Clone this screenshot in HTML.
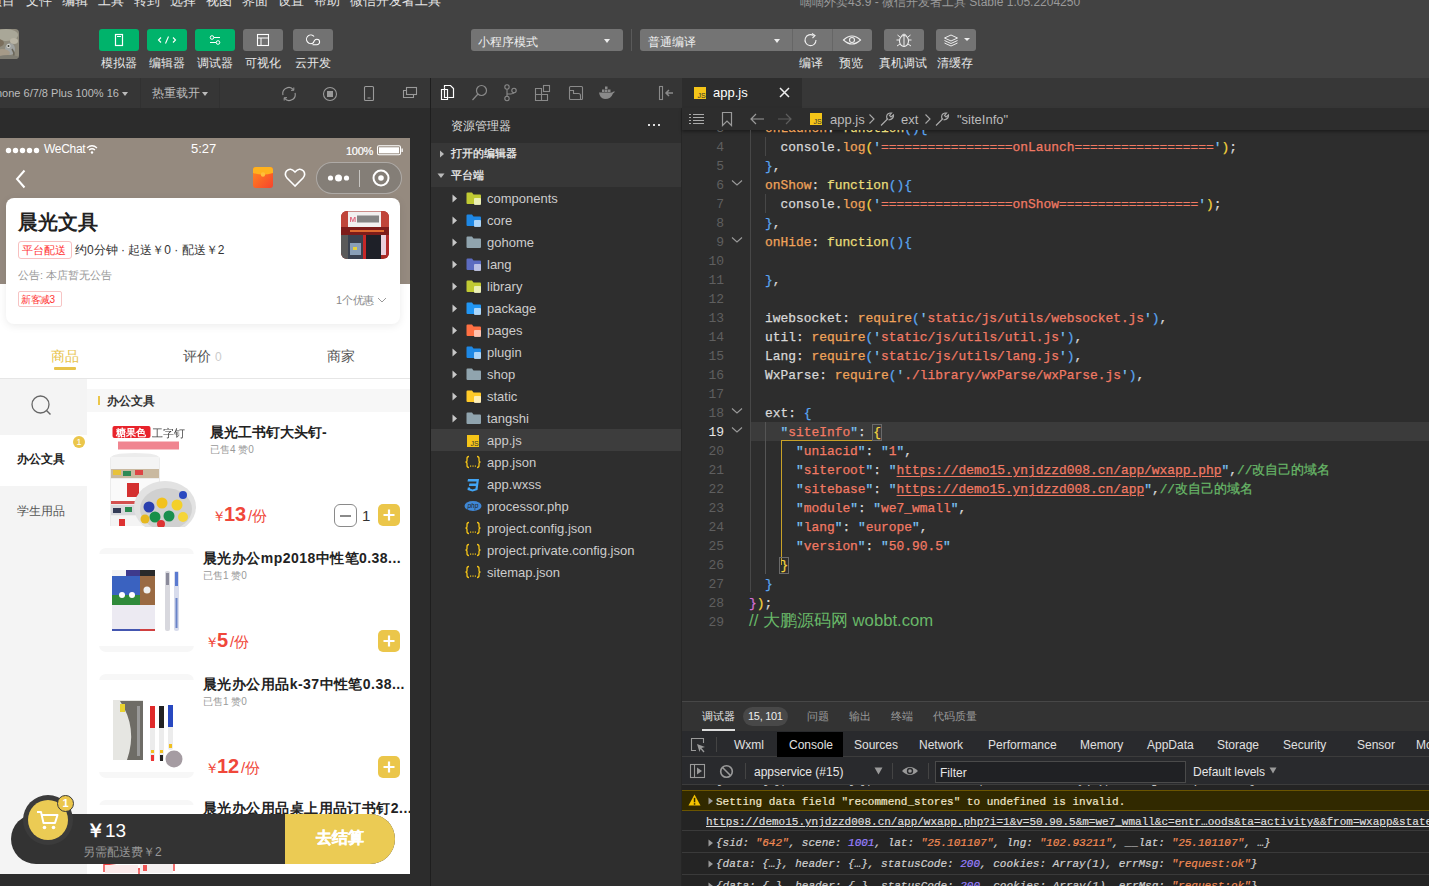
<!DOCTYPE html>
<html><head><meta charset="utf-8">
<style>
*{margin:0;padding:0;box-sizing:border-box}
html,body{width:1429px;height:886px;overflow:hidden;background:#2c2c2c;font-family:"Liberation Sans",sans-serif;color:#ddd}
.a{position:absolute}
.t{position:absolute;white-space:nowrap;line-height:1}
/* top */
#top{left:0;top:0;width:1429px;height:78px;background:#424242}
.menu{top:-6px;font-size:13px;color:#e6e6e6}
.tbtn{top:29px;width:40px;height:22px;border-radius:3px;background:#727272}
.tbtn.g{background:#00b36b}
.tlbl{top:57px;font-size:12px;color:#e8e8e8}
/* sim toolbar */
#simbar{left:0;top:78px;width:430px;height:30px;background:#363636}
#sim{left:0;top:108px;width:430px;height:778px;background:#2c2c2c}
#vsep{left:430px;top:78px;width:1px;height:808px;background:#1e1e1e}
/* explorer */
#exp{left:431px;top:78px;width:251px;height:808px;background:#2e2e2e}
#expbar{left:431px;top:78px;width:251px;height:30px;background:#353535}
/* editor */
#ed{left:682px;top:78px;width:747px;height:623px;background:#2d2d2d}
#tabbar{left:682px;top:78px;width:747px;height:30px;background:#373737}
#tab{left:682px;top:78px;width:120px;height:30px;background:#2d2d2d}
#crumb{left:682px;top:108px;width:747px;height:22px;background:#2d2d2d;box-shadow:0 2px 3px rgba(0,0,0,.35)}
/* debugger */
#dbg{left:682px;top:701px;width:747px;height:185px;background:#2b2b2b}
#dbgtabs{left:682px;top:701px;width:747px;height:30px;background:#333;border-top:1px solid #474747}
#dttabs{left:682px;top:731px;width:747px;height:26px;background:#292a2d;border-bottom:1px solid #3c3c3c}
#dtool{left:682px;top:757px;width:747px;height:28px;background:#292a2d;border-bottom:1px solid #3c3c3c}
.ln{left:690px;width:34px;text-align:right;font-family:"Liberation Mono",monospace;font-size:13px;line-height:19px}
.code{-webkit-text-stroke-width:0.25px;font-family:"Liberation Mono",monospace;font-size:12.9px;line-height:19px;white-space:pre}
.mono{-webkit-text-stroke-width:0.2px;font-family:"Liberation Mono",monospace;font-size:11px;line-height:1}
</style></head><body>
<div id="top" class="a"></div>
<div id="simbar" class="a"></div>
<div id="sim" class="a"></div>
<div id="vsep" class="a"></div>
<div id="exp" class="a"></div>
<div id="expbar" class="a"></div>
<div id="ed" class="a"></div>
<div class="a" style="left:681px;top:108px;width:1px;height:778px;background:#262626"></div>
<div id="tabbar" class="a"></div>
<div id="tab" class="a"></div>
<div id="crumb" class="a"></div>
<div id="dbg" class="a"></div>
<div id="dbgtabs" class="a"></div>
<div id="dttabs" class="a"></div>
<div id="dtool" class="a"></div>
<!--PHONE--><div class="a" id="phone" style="left:0;top:138px;width:410px;height:736px;background:#fff;overflow:hidden">
 <div class="a" style="left:0;top:0;width:410px;height:146px;background:#958a7f"></div>
 <!-- status bar -->
 <svg class="a" style="left:5px;top:9px" width="38" height="7"><circle cx="3.5" cy="3.5" r="2.7" fill="#fff"/><circle cx="10.5" cy="3.5" r="2.7" fill="#fff"/><circle cx="17.5" cy="3.5" r="2.7" fill="#fff"/><circle cx="24.5" cy="3.5" r="2.7" fill="#fff"/><circle cx="31.5" cy="3.5" r="2.7" fill="#fff"/></svg>
 <div class="t" style="left:44px;top:5px;font-size:12px;color:#fff;letter-spacing:-0.3px">WeChat</div>
 <svg class="a" style="left:86px;top:6px" width="12" height="10"><path d="M1 4 Q6 -0.5 11 4" fill="none" stroke="#fff" stroke-width="1.3"/><path d="M3 6 Q6 3.5 9 6" fill="none" stroke="#fff" stroke-width="1.3"/><circle cx="6" cy="8.5" r="1.2" fill="#fff"/></svg>
 <div class="t" style="left:191px;top:4px;font-size:13px;color:#fff">5:27</div>
 <div class="t" style="left:346px;top:8px;font-size:11px;color:#fff;letter-spacing:-0.3px;-webkit-text-stroke:0.2px #fff">100%</div>
 <svg class="a" style="left:376px;top:7px" width="28" height="11"><rect x="1.5" y="0.8" width="23" height="9" rx="1.5" fill="none" stroke="#fff" stroke-width="1.1"/><rect x="3" y="2.3" width="20" height="6" fill="#fff"/><path d="M25.5 3.5h1.3v3.5h-1.3z" fill="#fff"/></svg>
 <!-- nav -->
 <svg class="a" style="left:14px;top:31px" width="14" height="20"><path d="M10.5 1.5 L3 10 L10.5 18.5" fill="none" stroke="#fff" stroke-width="2"/></svg>
 <svg class="a" style="left:252px;top:28px" width="22" height="23"><defs><linearGradient id="re" x1="0" y1="0" x2="1" y2="1"><stop offset="0" stop-color="#ff8a1e"/><stop offset="1" stop-color="#f8432c"/></linearGradient></defs><rect x="1" y="1" width="20" height="21" rx="3" fill="url(#re)"/><path d="M1 4 Q1 1 4 1 H18 Q21 1 21 4 V7 Q11 10 1 7Z" fill="#ffb21e"/><circle cx="11" cy="8.5" r="2.2" fill="#ffbf3a"/></svg>
 <svg class="a" style="left:284px;top:29px" width="22" height="21"><path d="M11 19 L3 11 Q0 7.5 2.5 4 Q6.5 0 11 5 Q15.5 0 19.5 4 Q22 7.5 19 11Z" fill="none" stroke="#fff" stroke-width="1.6"/></svg>
 <div class="a" style="left:316px;top:24px;width:86px;height:32px;border-radius:16px;background:rgba(110,110,110,.45);border:1px solid rgba(255,255,255,.35)"></div>
 <svg class="a" style="left:326px;top:33px" width="26" height="14"><circle cx="4.5" cy="7" r="2.6" fill="#fff"/><circle cx="12.5" cy="7" r="3.5" fill="#fff"/><circle cx="20.5" cy="7" r="2.6" fill="#fff"/></svg>
 <div class="a" style="left:359px;top:32px;width:1px;height:17px;background:rgba(255,255,255,.55)"></div>
 <svg class="a" style="left:371px;top:30px" width="20" height="20"><circle cx="10" cy="10" r="7.5" fill="none" stroke="#fff" stroke-width="2"/><circle cx="10" cy="10" r="2.8" fill="#fff"/></svg>
 <!-- store card -->
 <div class="a" style="left:6px;top:60px;width:394px;height:126px;background:#fff;border-radius:8px;box-shadow:0 2px 8px rgba(0,0,0,.08)"></div>
 <div class="t" style="left:18px;top:74px;font-size:20px;font-weight:bold;color:#222">晨光文具</div>
 <div class="a" style="left:18px;top:103px;width:54px;height:18px;border:1px solid #f8c0c0;border-radius:3px"></div>
 <div class="t" style="left:22px;top:107px;font-size:11px;color:#f33">平台配送</div>
 <div class="t" style="left:75px;top:106px;font-size:12px;color:#333">约0分钟 · 起送￥0 · 配送￥2</div>
 <svg class="a" style="left:341px;top:73px;filter:blur(0.5px)" width="48" height="48"><defs><clipPath id="rc"><rect width="48" height="48" rx="6"/></clipPath></defs><g clip-path="url(#rc)">
  <rect width="48" height="48" fill="#a52a24"/>
  <rect x="0" y="0" width="7" height="16" fill="#c0453a"/><rect x="40" y="0" width="8" height="16" fill="#c0453a"/>
  <rect x="7" y="0.5" width="33" height="15.5" fill="#f2f0f0"/>
  <text x="8.5" y="11" font-size="8" font-family="Liberation Sans" font-weight="bold" fill="#e06a80">M</text>
  <rect x="16" y="4.5" width="22" height="7" fill="#555" opacity=".7"/>
  <rect x="0" y="16" width="48" height="8" fill="#7e1c1a"/>
  <rect x="9" y="19" width="34" height="2" fill="#e06a30"/>
  <rect x="0" y="24" width="7" height="24" fill="#5a5a5a"/>
  <rect x="7" y="24" width="15" height="24" fill="#3a4250"/>
  <rect x="9" y="32" width="11" height="12" fill="#8aa0b8"/>
  <rect x="12" y="36" width="4" height="3" fill="#e6d23a"/>
  <rect x="22" y="24" width="3" height="24" fill="#c62828"/>
  <rect x="25" y="24" width="15" height="24" fill="#1e2028"/>
  <rect x="40" y="24" width="5" height="20" fill="#e9d0dc"/>
  <rect x="45" y="24" width="3" height="24" fill="#b02a2a"/>
</g></svg>
 <div class="t" style="left:18px;top:132px;font-size:11px;color:#999">公告: 本店暂无公告</div>
 <div class="a" style="left:18px;top:153px;width:44px;height:16px;border:1px solid #f7c4c4;border-radius:2px"></div>
 <div class="t" style="left:21px;top:157px;font-size:10px;color:#f33;letter-spacing:-0.5px">新客减3</div>
 <div class="t" style="left:336px;top:157px;font-size:11px;color:#888;letter-spacing:-0.3px">1个优惠</div>
 <svg class="a" style="left:377px;top:159px" width="10" height="7"><path d="M1 1 L5 5 L9 1" fill="none" stroke="#999" stroke-width="1"/></svg>
 <!-- tabs -->
 <div class="t" style="left:51px;top:211px;font-size:14px;color:#e8c34a">商品</div>
 <div class="a" style="left:54px;top:229px;width:22px;height:3px;background:#e8c34a;border-radius:1px"></div>
 <div class="t" style="left:183px;top:211px;font-size:14px;color:#555">评价 <span style="color:#ccc;font-size:12px">0</span></div>
 <div class="t" style="left:327px;top:211px;font-size:14px;color:#555">商家</div>
 <div class="a" style="left:0;top:240px;width:410px;height:1px;background:#e6e6e6"></div>
 <!-- left categories -->
 <div class="a" style="left:0;top:241px;width:87px;height:495px;background:#f4f4f4"></div>
 <svg class="a" style="left:30px;top:256px" width="24" height="24"><circle cx="10.5" cy="10.5" r="8.5" fill="none" stroke="#666" stroke-width="1.3"/><path d="M16.5 16.5 L20.5 20.5" stroke="#666" stroke-width="1.5"/></svg>
 <div class="a" style="left:0;top:297px;width:87px;height:51px;background:#fff"></div>
 <div class="t" style="left:17px;top:315px;font-size:12px;color:#222;font-weight:bold">办公文具</div>
 <div class="a" style="left:73px;top:298px;width:12px;height:12px;border-radius:6px;background:#ebc64a;color:#fff;font-size:9px;line-height:12px;text-align:center">1</div>
 <div class="t" style="left:17px;top:367px;font-size:12px;color:#555">学生用品</div>
 <!-- section header -->
 <div class="a" style="left:87px;top:251px;width:323px;height:23px;background:#f7f7f7"></div>
 <div class="a" style="left:98px;top:258px;width:2px;height:9px;background:#ebc64a"></div>
 <div class="t" style="left:107px;top:257px;font-size:12px;color:#333;font-weight:bold">办公文具</div>
 <!-- product 1 -->
 <svg class="a" style="left:99px;top:285px;filter:blur(0.45px)" width="102" height="104">
  <rect x="0" y="0" width="102" height="104" fill="#fff"/>
  <rect x="13.5" y="3" width="38" height="12" rx="2" fill="#e8232b"/>
  <text x="17" y="13" font-size="10" font-family="Liberation Sans" font-weight="bold" fill="#fff">糖果色</text>
  <text x="53" y="13.5" font-size="10.5" font-family="Liberation Sans" fill="#444">工字钉</text>
  <rect x="19" y="18.5" width="61" height="8" fill="#f08590"/>
  <path d="M11 36 Q11 30 36 30 Q61 30 61 36 V103 H11Z" fill="#ececec"/>
  <rect x="12" y="34" width="48" height="12" fill="#f4f4f4"/>
  <rect x="12" y="46" width="48" height="9" fill="#c9b9a0"/>
  <rect x="14" y="47" width="8" height="5" fill="#e8c23a"/><rect x="24" y="48" width="8" height="5" fill="#2d8a55"/><rect x="36" y="47" width="8" height="5" fill="#d44"/>
  <rect x="12" y="56" width="48" height="22" fill="#fafafa"/>
  <rect x="28" y="60" width="12" height="14" fill="#d43030"/>
  <rect x="12" y="78" width="48" height="3" fill="#d45050"/>
  <rect x="12" y="82" width="48" height="10" fill="#d8d8dc"/><rect x="14" y="85" width="8" height="5" fill="#333a55"/><rect x="26" y="84" width="7" height="5" fill="#2a8a50"/>
  <rect x="12" y="93" width="48" height="10" fill="#f4f4f4"/>
  <rect x="20" y="96" width="6" height="7" fill="#d33"/>
  <ellipse cx="66" cy="84" rx="31" ry="26" fill="#e2e2e2"/>
  <ellipse cx="67" cy="86" rx="26" ry="21" fill="#d0d0d0"/>
  <circle cx="50" cy="84" r="5.5" fill="#2a3fae"/><circle cx="63" cy="80" r="5.5" fill="#f2c21e"/><circle cx="78" cy="82" r="5.5" fill="#f3d02a"/>
  <circle cx="56" cy="94" r="5.5" fill="#17904a"/><circle cx="70" cy="93" r="5.5" fill="#1a8f4f"/><circle cx="84" cy="94" r="5" fill="#f5d53a"/>
  <circle cx="46" cy="96" r="4.5" fill="#e6b820"/><circle cx="62" cy="101" r="4" fill="#d33"/><circle cx="84" cy="72" r="4" fill="#2a48c0"/>
 </svg>
 <div class="t" style="left:210px;top:287px;font-size:14px;color:#222;font-weight:bold">晨光工书钉大头钉-</div>
 <div class="t" style="left:210px;top:307px;font-size:10px;color:#999">已售4 赞0</div>
 <div class="t" style="left:212px;top:371px;font-size:14px;color:#f0473a">￥</div>
 <div class="t" style="left:224px;top:366px;font-size:20px;color:#f0473a;font-weight:bold">13</div>
 <div class="t" style="left:248px;top:370px;font-size:15px;color:#f0473a">/份</div>
 <div class="a" style="left:334px;top:366px;width:23px;height:23px;border:1.3px solid #8a8a8a;border-radius:6px"></div>
 <div class="a" style="left:340px;top:377px;width:11px;height:1.5px;background:#8a8a8a"></div>
 <div class="t" style="left:362px;top:370px;font-size:15px;color:#333">1</div>
 <div class="a" style="left:378px;top:366px;width:22px;height:22px;border-radius:5px;background:#ebc64a"></div>
 <svg class="a" style="left:378px;top:366px" width="22" height="22"><path d="M11 5.5V16.5M5.5 11H16.5" stroke="#fff" stroke-width="2.2"/></svg>
 <!-- product 2 -->
 <div class="a" style="left:99px;top:410px;width:95px;height:104px;background:#f7f7f7;border-radius:7px"></div>
 <div class="a" style="left:99px;top:416px;width:95px;height:92px;background:#fff"></div>
 <svg class="a" style="left:110px;top:430px;filter:blur(0.45px)" width="72" height="66">
  <rect x="2" y="2" width="43" height="61" fill="#f2f2f6"/>
  <rect x="2" y="2" width="14" height="6" fill="#f4f4f4"/><rect x="16" y="2" width="14" height="6" fill="#3e3a8c"/><rect x="30" y="2" width="15" height="6" fill="#2a2a2a"/>
  <rect x="2" y="8" width="28" height="27" fill="#3a62c0"/>
  <rect x="2" y="27" width="28" height="10" fill="#2f8a3a"/>
  <circle cx="12" cy="27" r="3" fill="#fff"/><circle cx="22" cy="27" r="3" fill="#fff"/>
  <rect x="30" y="8" width="15" height="29" fill="#9a6a42"/>
  <circle cx="37" cy="22" r="3.5" fill="#f0f0f0"/>
  <rect x="2" y="37" width="43" height="24" fill="#eceaf2"/>
  <rect x="2" y="61" width="28" height="2" fill="#4456b0"/><rect x="30" y="61" width="15" height="2" fill="#d04040"/>
  <rect x="55" y="3" width="5" height="60" rx="2" fill="#d8d8de"/><rect x="56" y="5" width="3" height="12" fill="#8a8a9a"/>
  <rect x="64" y="3" width="5" height="60" rx="2" fill="#d8dcec"/><rect x="65" y="4" width="3" height="14" fill="#5a7ad0"/><rect x="65.5" y="30" width="2" height="30" fill="#6a84c8"/>
 </svg>
 <div class="t" style="left:203px;top:413px;font-size:14px;color:#222;font-weight:bold;letter-spacing:0.45px">晨光办公mp2018中性笔0.38...</div>
 <div class="t" style="left:203px;top:433px;font-size:10px;color:#999">已售1 赞0</div>
 <div class="t" style="left:205px;top:497px;font-size:14px;color:#f0473a">￥</div>
 <div class="t" style="left:217px;top:492px;font-size:20px;color:#f0473a;font-weight:bold">5</div>
 <div class="t" style="left:230px;top:496px;font-size:15px;color:#f0473a">/份</div>
 <div class="a" style="left:378px;top:492px;width:22px;height:22px;border-radius:5px;background:#ebc64a"></div>
 <svg class="a" style="left:378px;top:492px" width="22" height="22"><path d="M11 5.5V16.5M5.5 11H16.5" stroke="#fff" stroke-width="2.2"/></svg>
 <!-- product 3 -->
 <div class="a" style="left:99px;top:536px;width:95px;height:104px;background:#f7f7f7;border-radius:7px"></div>
 <div class="a" style="left:99px;top:542px;width:95px;height:92px;background:#fff"></div>
 <svg class="a" style="left:110px;top:560px;filter:blur(0.45px)" width="76" height="72">
  <rect x="3" y="2" width="30" height="60" fill="#e6e6e2"/>
  <path d="M10 3 H33 V62 H17 Q28 30 10 3Z" fill="#6e6c66"/>
  <rect x="10" y="6" width="5" height="8" fill="#e8d230"/>
  <rect x="27" y="8" width="3" height="50" fill="#999"/>
  <rect x="40" y="8" width="5" height="55" rx="2" fill="#ececec"/><rect x="40" y="8" width="5" height="22" fill="#e02a2a"/><rect x="41" y="52" width="3" height="3" fill="#f0c020"/><rect x="41" y="57" width="3" height="6" fill="#e33"/>
  <rect x="49" y="8" width="5" height="55" rx="2" fill="#ececec"/><rect x="49" y="8" width="5" height="22" fill="#222"/><rect x="50" y="52" width="3" height="3" fill="#f0c020"/><rect x="50" y="57" width="3" height="6" fill="#222"/>
  <rect x="58" y="7" width="5" height="45" rx="2" fill="#ececec"/><rect x="58" y="7" width="5" height="22" fill="#2848c0"/><rect x="59" y="46" width="3" height="4" fill="#f0c020"/>
  <circle cx="64" cy="61" r="8.5" fill="#a59ca2"/>
 </svg>
 <div class="t" style="left:203px;top:539px;font-size:14px;color:#222;font-weight:bold;letter-spacing:0.45px">晨光办公用品k-37中性笔0.38...</div>
 <div class="t" style="left:203px;top:559px;font-size:10px;color:#999">已售1 赞0</div>
 <div class="t" style="left:205px;top:623px;font-size:14px;color:#f0473a">￥</div>
 <div class="t" style="left:217px;top:618px;font-size:20px;color:#f0473a;font-weight:bold">12</div>
 <div class="t" style="left:241px;top:622px;font-size:15px;color:#f0473a">/份</div>
 <div class="a" style="left:378px;top:618px;width:22px;height:22px;border-radius:5px;background:#ebc64a"></div>
 <svg class="a" style="left:378px;top:618px" width="22" height="22"><path d="M11 5.5V16.5M5.5 11H16.5" stroke="#fff" stroke-width="2.2"/></svg>
 <!-- product 4 -->
 <div class="a" style="left:99px;top:662px;width:95px;height:80px;background:#f7f7f7;border-radius:7px"></div>
 <div class="a" style="left:99px;top:667px;width:95px;height:70px;background:#fff"></div>
 <svg class="a" style="left:99px;top:722px;filter:blur(0.4px)" width="95" height="14"><path d="M5 4 L40 9 L75 3 M5 4 V12 M40 9 V14 M75 3 V11" stroke="#e44" stroke-width="1.5" fill="none"/><rect x="6" y="5" width="33" height="8" fill="#fbeaea"/><rect x="41" y="4" width="33" height="9" fill="#f4f0f0"/><rect x="44" y="5" width="4" height="6" fill="#e55"/></svg>
 <div class="t" style="left:203px;top:663px;font-size:14px;color:#222;font-weight:bold;letter-spacing:0.45px">晨光办公用品桌上用品订书钉2...</div>
 <!-- cart bar -->
 <div class="a" style="left:11px;top:676px;width:384px;height:50px;border-radius:25px;background:#333;overflow:hidden">
   <div class="a" style="left:274px;top:0;width:110px;height:50px;background:#ebcb54"></div>
 </div>
 <div class="t" style="left:316px;top:692px;font-size:16px;color:#fff;font-weight:bold;-webkit-text-stroke:0.3px #fff">去结算</div>
 <div class="a" style="left:23px;top:657px;width:50px;height:50px;border-radius:25px;background:#3b3b3b"></div>
 <div class="a" style="left:28px;top:662px;width:40px;height:40px;border-radius:20px;background:#ebcb54"></div>
 <svg class="a" style="left:34px;top:668px" width="28" height="28"><path d="M3 6 H7 L9.5 17 H21 L23.5 9 H8" fill="none" stroke="#fff" stroke-width="2" stroke-linejoin="round"/><circle cx="10.5" cy="21.5" r="1.8" fill="#fff"/><circle cx="19.5" cy="21.5" r="1.8" fill="#fff"/></svg>
 <div class="a" style="left:57px;top:657px;width:17px;height:17px;border-radius:9px;background:#ebc64a;border:1.5px solid #3b3b3b;color:#fff;font-size:11px;font-weight:bold;line-height:14px;text-align:center">1</div>
 <div class="t" style="left:86px;top:683px;font-size:19px;color:#fff"><b>￥</b>13</div>
 <div class="t" style="left:83px;top:708px;font-size:12px;color:#999">另需配送费￥2</div>
</div>
<!--/PHONE-->
<!--TOPCONTENT--><!-- menu -->
<div class="t menu" style="left:-11px">项目</div>
<div class="t menu" style="left:26px">文件</div>
<div class="t menu" style="left:62px">编辑</div>
<div class="t menu" style="left:98px">工具</div>
<div class="t menu" style="left:134px">转到</div>
<div class="t menu" style="left:170px">选择</div>
<div class="t menu" style="left:206px">视图</div>
<div class="t menu" style="left:242px">界面</div>
<div class="t menu" style="left:278px">设置</div>
<div class="t menu" style="left:314px">帮助</div>
<div class="t menu" style="left:350px">微信开发者工具</div>
<div class="t menu" style="left:800px;top:-4px;font-size:12px;color:#9a9a9a">嘀嘀外卖43.9 - 微信开发者工具 Stable 1.05.2204250</div>
<!-- avatar -->
<svg class="a" style="left:-12px;top:29px;filter:blur(0.6px)" width="31" height="30"><defs><clipPath id="av"><rect width="31" height="30" rx="4"/></clipPath></defs><g clip-path="url(#av)">
<rect width="31" height="30" fill="#8e8a7c"/>
<ellipse cx="18" cy="6" rx="12" ry="6" fill="#a9a798"/>
<ellipse cx="10" cy="14" rx="6" ry="4" fill="#7a6e5c"/>
<ellipse cx="22" cy="20" rx="5" ry="6" fill="#9fa2a0"/>
<ellipse cx="14" cy="24" rx="8" ry="4" fill="#a59a88"/>
<ellipse cx="26" cy="12" rx="4" ry="3" fill="#b8b4a4"/>
<circle cx="20.5" cy="17" r="2" fill="#d8d8d0"/><circle cx="20.5" cy="17" r="1" fill="#3a3a30"/>
<path d="M24 20 Q28 26 24 29" stroke="#6a665a" stroke-width="1.5" fill="none"/>
<ellipse cx="20" cy="29" rx="12" ry="3" fill="#7e7c72"/>
</g></svg>
<!-- green buttons -->
<div class="a tbtn g" style="left:99px">
 <svg width="40" height="22"><rect x="16.5" y="5.5" width="7" height="11" fill="none" stroke="#fff" stroke-width="1.2"/><line x1="18" y1="7.5" x2="22" y2="7.5" stroke="#fff"/></svg></div>
<div class="a tbtn g" style="left:147px">
 <svg width="40" height="22"><path d="M14 8.5 L11.5 11 L14 13.5 M26 8.5 L28.5 11 L26 13.5 M21.5 7.5 L18.5 14.5" fill="none" stroke="#fff" stroke-width="1.1"/></svg></div>
<div class="a tbtn g" style="left:195px">
 <svg width="40" height="22"><line x1="15" y1="8.5" x2="25" y2="8.5" stroke="#fff"/><line x1="15" y1="13.5" x2="25" y2="13.5" stroke="#fff"/><circle cx="17" cy="8.5" r="1.8" fill="#00b36b" stroke="#fff"/><circle cx="23" cy="13.5" r="1.8" fill="#00b36b" stroke="#fff"/></svg></div>
<div class="a tbtn" style="left:243px">
 <svg width="40" height="22"><rect x="14.5" y="5.5" width="11" height="11" fill="none" stroke="#fff" stroke-width="1.1"/><line x1="14.5" y1="9" x2="25.5" y2="9" stroke="#fff"/><line x1="18" y1="9" x2="18" y2="16.5" stroke="#fff"/></svg></div>
<div class="a tbtn" style="left:293px">
 <svg width="40" height="22"><path d="M21.1 7.5 A4.3 4.3 0 1 0 20.3 13.8 Q21.5 10.2 23.8 10.2 A2.8 2.8 0 0 1 23.8 15.8 H19.5" fill="none" stroke="#fff" stroke-width="1.1"/></svg></div>
<div class="t tlbl" style="left:101px">模拟器</div>
<div class="t tlbl" style="left:149px">编辑器</div>
<div class="t tlbl" style="left:197px">调试器</div>
<div class="t tlbl" style="left:245px">可视化</div>
<div class="t tlbl" style="left:295px">云开发</div>
<!-- mode select -->
<div class="a" style="left:471px;top:29px;width:152px;height:22px;border-radius:3px;background:#747474"></div>
<div class="t" style="left:478px;top:36px;font-size:12px;color:#eee">小程序模式</div>
<svg class="a" style="left:604px;top:39px" width="6" height="4"><path d="M0 0H6L3 4Z" fill="#eee"/></svg>
<div class="a" style="left:631px;top:29px;width:1px;height:22px;background:#5a5a5a"></div>
<div class="a" style="left:640px;top:29px;width:232px;height:22px;border-radius:3px;background:#747474"></div>
<div class="a" style="left:792px;top:29px;width:1px;height:22px;background:#666"></div>
<div class="a" style="left:832px;top:29px;width:1px;height:22px;background:#666"></div>
<div class="t" style="left:648px;top:36px;font-size:12px;color:#eee">普通编译</div>
<svg class="a" style="left:774px;top:39px" width="6" height="4"><path d="M0 0H6L3 4Z" fill="#eee"/></svg>
<svg class="a" style="left:802px;top:32px" width="18" height="16"><path d="M14 8 A5.5 5.5 0 1 1 11.5 3.5" fill="none" stroke="#eee" stroke-width="1.1"/><path d="M10 1.5 L13 3.5 L10.5 6" fill="none" stroke="#eee" stroke-width="1.1"/></svg>
<svg class="a" style="left:842px;top:33px" width="20" height="14"><path d="M1.5 7 Q10 -1 18.5 7 Q10 15 1.5 7Z" fill="none" stroke="#eee" stroke-width="1.1"/><circle cx="10" cy="7" r="2.5" fill="none" stroke="#eee" stroke-width="1.1"/></svg>
<div class="a" style="left:884px;top:29px;width:40px;height:22px;border-radius:3px;background:#747474"></div>
<svg class="a" style="left:894px;top:31px" width="20" height="18"><ellipse cx="10" cy="10" rx="4.5" ry="5.5" fill="none" stroke="#eee" stroke-width="1.1"/><path d="M10 4.5V15.5 M5.5 9H2.5 M14.5 9H17.5 M6 13L3 15 M14 13L17 15 M6 6L3.5 4 M14 6L16.5 4 M7.5 4.5 Q10 1.5 12.5 4.5" fill="none" stroke="#eee" stroke-width="1"/></svg>
<div class="a" style="left:936px;top:29px;width:40px;height:22px;border-radius:3px;background:#747474"></div>
<svg class="a" style="left:942px;top:32px" width="30" height="16"><path d="M2.5 6 L9 3 L15.5 6 L9 9Z M2.5 8.5 L9 11.5 L15.5 8.5 M2.5 11 L9 14 L15.5 11" fill="none" stroke="#eee" stroke-width="1"/><path d="M22 6H28L25 9Z" fill="#eee"/></svg>
<div class="t tlbl" style="left:799px">编译</div>
<div class="t tlbl" style="left:839px">预览</div>
<div class="t tlbl" style="left:879px">真机调试</div>
<div class="t tlbl" style="left:937px">清缓存</div>
<!-- sim toolbar -->
<div class="t" style="left:-4px;top:88px;font-size:11px;color:#bdbdbd">hone 6/7/8 Plus 100% 16</div>
<svg class="a" style="left:122px;top:92px" width="6" height="4"><path d="M0 0H6L3 4Z" fill="#bbb"/></svg>
<div class="a" style="left:140px;top:78px;width:1px;height:30px;background:#313131"></div>
<div class="t" style="left:152px;top:88px;font-size:11.5px;color:#bdbdbd">热重载</div><div class="t" style="left:188px;top:88px;font-size:11.5px;color:#bdbdbd">开</div>
<svg class="a" style="left:202px;top:92px" width="6" height="4"><path d="M0 0H6L3 4Z" fill="#bbb"/></svg>
<div class="a" style="left:219px;top:78px;width:1px;height:30px;background:#313131"></div>
<svg class="a" style="left:281px;top:86px" width="16" height="16"><path d="M2 9 A6 6 0 0 1 12.5 3.8 M14 7 A6 6 0 0 1 3.5 12.2" fill="none" stroke="#9a9a9a" stroke-width="1.1"/><path d="M12.8 1.5V4.3H10" fill="none" stroke="#9a9a9a"/><path d="M3.2 14.5V11.7H6" fill="none" stroke="#9a9a9a"/></svg>
<svg class="a" style="left:322px;top:86px" width="16" height="16"><circle cx="8" cy="8" r="6.5" fill="none" stroke="#9a9a9a" stroke-width="1.1"/><rect x="5" y="5" width="6" height="6" fill="#9a9a9a"/></svg>
<svg class="a" style="left:363px;top:85px" width="12" height="18"><rect x="1.5" y="1.5" width="9" height="14" rx="1" fill="none" stroke="#9a9a9a" stroke-width="1.1"/><line x1="4.5" y1="13" x2="7.5" y2="13" stroke="#9a9a9a"/></svg>
<svg class="a" style="left:402px;top:86px" width="16" height="14"><rect x="4.5" y="1.5" width="10" height="7" fill="none" stroke="#9a9a9a" stroke-width="1.1"/><path d="M4.5 4.5H1.5V11.5H11.5V8.5" fill="none" stroke="#9a9a9a" stroke-width="1.1"/></svg>
<!--/TOPCONTENT-->
<!--EXPCONTENT--><svg class="a" style="left:438px;top:84px" width="18" height="18"><path d="M6.5 3.5 V1.5 H12.5 L15.5 4.5 V13.5 H10.5" fill="none" stroke="#fff" stroke-width="1.2"/><path d="M3.5 5.5 H9.5 V15.5 H3.5Z" fill="none" stroke="#fff" stroke-width="1.2"/><path d="M6.5 3.5 V13.5 H10.5" fill="none" stroke="#fff" stroke-width="1.2"/></svg>
<svg class="a" style="left:471px;top:84px" width="18" height="18"><circle cx="10.5" cy="6.5" r="5" fill="none" stroke="#8a8a8a" stroke-width="1.2"/><path d="M7 10 L1.5 16" stroke="#8a8a8a" stroke-width="1.2"/></svg>
<svg class="a" style="left:503px;top:84px" width="16" height="18"><circle cx="4" cy="3" r="2.2" fill="none" stroke="#8a8a8a" stroke-width="1.1"/><circle cx="4" cy="14.5" r="2.2" fill="none" stroke="#8a8a8a" stroke-width="1.1"/><circle cx="11" cy="6.5" r="2.2" fill="none" stroke="#8a8a8a" stroke-width="1.1"/><path d="M4 5.2 V12.3 M4 10 Q11 10 11 8.7" fill="none" stroke="#8a8a8a" stroke-width="1.1"/></svg>
<svg class="a" style="left:534px;top:84px" width="18" height="18"><path d="M1.5 4.5 H7.5 V10.5 H13.5 V16.5 H1.5Z M1.5 10.5 H7.5 V16.5" fill="none" stroke="#8a8a8a" stroke-width="1.1"/><rect x="9.5" y="1.5" width="6" height="6" fill="none" stroke="#8a8a8a" stroke-width="1.1"/></svg>
<svg class="a" style="left:568px;top:85px" width="16" height="16"><rect x="1.5" y="1.5" width="13" height="13" rx="1" fill="none" stroke="#8a8a8a" stroke-width="1.1"/><path d="M1.5 5.5 H5.5 V8.5 H10.5 Q12.5 8.5 12.5 10.5 V14.5" fill="none" stroke="#8a8a8a" stroke-width="1.1"/></svg>
<svg class="a" style="left:598px;top:86px" width="18" height="14"><path d="M1 6.5 H14 Q15 5 17 5.5 Q16 7 15 7.5 Q13 13 7 13 Q2 13 1 6.5Z" fill="#8a8a8a"/><rect x="4" y="3.5" width="2.5" height="2.5" fill="#8a8a8a"/><rect x="7" y="3.5" width="2.5" height="2.5" fill="#8a8a8a"/><rect x="10" y="3.5" width="2.5" height="2.5" fill="#8a8a8a"/><rect x="7" y="0.5" width="2.5" height="2.5" fill="#8a8a8a"/></svg>
<svg class="a" style="left:658px;top:85px" width="16" height="16"><rect x="1.5" y="1.5" width="3" height="13" fill="none" stroke="#8a8a8a" stroke-width="1.1"/><path d="M15 8 H8 M11 5 L8 8 L11 11" fill="none" stroke="#8a8a8a" stroke-width="1.5"/></svg>
<div class="t" style="left:451px;top:120px;font-size:12px;color:#ddd">资源管理器</div>
<svg class="a" style="left:648px;top:124px" width="14" height="3"><rect x="0" y="0" width="2" height="2" fill="#ddd"/><rect x="5" y="0" width="2" height="2" fill="#ddd"/><rect x="10" y="0" width="2" height="2" fill="#ddd"/></svg>
<div class="a" style="left:431px;top:143px;width:250px;height:44px;background:#373737"></div>
<svg class="a" style="left:439px;top:150px" width="6" height="8"><path d="M1 0.5 L5 4 L1 7.5Z" fill="#bbb"/></svg>
<div class="t" style="left:451px;top:148px;font-size:11px;color:#ddd;font-weight:bold">打开的编辑器</div>
<svg class="a" style="left:437px;top:173px" width="8" height="6"><path d="M0.5 0.5 H7.5 L4 5Z" fill="#bbb"/></svg>
<div class="t" style="left:451px;top:170px;font-size:11px;color:#ddd;font-weight:bold">平台端</div>

<svg class="a" style="left:452px;top:194px" width="6" height="9"><path d="M0.5 0.5 L5 4.5 L0.5 8.5Z" fill="#c8c8c8"/></svg>
<svg class="a" style="left:466px;top:192px" width="16" height="14"><path d="M0.5 1.5 Q0.5 0.5 1.5 0.5 H6 L7.5 2.5 H14 Q15 2.5 15 3.5 V11 Q15 12 14 12 H1.5 Q0.5 12 0.5 11Z" fill="#c0ca33"/><rect x="8" y="6" width="7" height="7" rx="1" fill="#f0f4c3" opacity=".9"/></svg>
<div class="t" style="left:487px;top:192px;font-size:13px;color:#ccc">components</div>
<svg class="a" style="left:452px;top:216px" width="6" height="9"><path d="M0.5 0.5 L5 4.5 L0.5 8.5Z" fill="#c8c8c8"/></svg>
<svg class="a" style="left:466px;top:214px" width="16" height="14"><path d="M0.5 1.5 Q0.5 0.5 1.5 0.5 H6 L7.5 2.5 H14 Q15 2.5 15 3.5 V11 Q15 12 14 12 H1.5 Q0.5 12 0.5 11Z" fill="#1e88e5"/><rect x="8" y="6" width="7" height="7" rx="1" fill="#bbdefb" opacity=".9"/></svg>
<div class="t" style="left:487px;top:214px;font-size:13px;color:#ccc">core</div>
<svg class="a" style="left:452px;top:238px" width="6" height="9"><path d="M0.5 0.5 L5 4.5 L0.5 8.5Z" fill="#c8c8c8"/></svg>
<svg class="a" style="left:466px;top:236px" width="16" height="14"><path d="M0.5 1.5 Q0.5 0.5 1.5 0.5 H6 L7.5 2.5 H14 Q15 2.5 15 3.5 V11 Q15 12 14 12 H1.5 Q0.5 12 0.5 11Z" fill="#90a4ae"/></svg>
<div class="t" style="left:487px;top:236px;font-size:13px;color:#ccc">gohome</div>
<svg class="a" style="left:452px;top:260px" width="6" height="9"><path d="M0.5 0.5 L5 4.5 L0.5 8.5Z" fill="#c8c8c8"/></svg>
<svg class="a" style="left:466px;top:258px" width="16" height="14"><path d="M0.5 1.5 Q0.5 0.5 1.5 0.5 H6 L7.5 2.5 H14 Q15 2.5 15 3.5 V11 Q15 12 14 12 H1.5 Q0.5 12 0.5 11Z" fill="#5c6bc0"/><rect x="8" y="6" width="7" height="7" rx="1" fill="#c5cae9" opacity=".9"/></svg>
<div class="t" style="left:487px;top:258px;font-size:13px;color:#ccc">lang</div>
<svg class="a" style="left:452px;top:282px" width="6" height="9"><path d="M0.5 0.5 L5 4.5 L0.5 8.5Z" fill="#c8c8c8"/></svg>
<svg class="a" style="left:466px;top:280px" width="16" height="14"><path d="M0.5 1.5 Q0.5 0.5 1.5 0.5 H6 L7.5 2.5 H14 Q15 2.5 15 3.5 V11 Q15 12 14 12 H1.5 Q0.5 12 0.5 11Z" fill="#c0ca33"/><rect x="8" y="6" width="7" height="7" rx="1" fill="#f0f4c3" opacity=".9"/></svg>
<div class="t" style="left:487px;top:280px;font-size:13px;color:#ccc">library</div>
<svg class="a" style="left:452px;top:304px" width="6" height="9"><path d="M0.5 0.5 L5 4.5 L0.5 8.5Z" fill="#c8c8c8"/></svg>
<svg class="a" style="left:466px;top:302px" width="16" height="14"><path d="M0.5 1.5 Q0.5 0.5 1.5 0.5 H6 L7.5 2.5 H14 Q15 2.5 15 3.5 V11 Q15 12 14 12 H1.5 Q0.5 12 0.5 11Z" fill="#2196f3"/><rect x="8" y="6" width="7" height="7" rx="1" fill="#bbdefb" opacity=".9"/></svg>
<div class="t" style="left:487px;top:302px;font-size:13px;color:#ccc">package</div>
<svg class="a" style="left:452px;top:326px" width="6" height="9"><path d="M0.5 0.5 L5 4.5 L0.5 8.5Z" fill="#c8c8c8"/></svg>
<svg class="a" style="left:466px;top:324px" width="16" height="14"><path d="M0.5 1.5 Q0.5 0.5 1.5 0.5 H6 L7.5 2.5 H14 Q15 2.5 15 3.5 V11 Q15 12 14 12 H1.5 Q0.5 12 0.5 11Z" fill="#ff7043"/><rect x="8" y="6" width="7" height="7" rx="1" fill="#ffccbc" opacity=".9"/></svg>
<div class="t" style="left:487px;top:324px;font-size:13px;color:#ccc">pages</div>
<svg class="a" style="left:452px;top:348px" width="6" height="9"><path d="M0.5 0.5 L5 4.5 L0.5 8.5Z" fill="#c8c8c8"/></svg>
<svg class="a" style="left:466px;top:346px" width="16" height="14"><path d="M0.5 1.5 Q0.5 0.5 1.5 0.5 H6 L7.5 2.5 H14 Q15 2.5 15 3.5 V11 Q15 12 14 12 H1.5 Q0.5 12 0.5 11Z" fill="#1e88e5"/><rect x="8" y="6" width="7" height="7" rx="1" fill="#bbdefb" opacity=".9"/></svg>
<div class="t" style="left:487px;top:346px;font-size:13px;color:#ccc">plugin</div>
<svg class="a" style="left:452px;top:370px" width="6" height="9"><path d="M0.5 0.5 L5 4.5 L0.5 8.5Z" fill="#c8c8c8"/></svg>
<svg class="a" style="left:466px;top:368px" width="16" height="14"><path d="M0.5 1.5 Q0.5 0.5 1.5 0.5 H6 L7.5 2.5 H14 Q15 2.5 15 3.5 V11 Q15 12 14 12 H1.5 Q0.5 12 0.5 11Z" fill="#90a4ae"/></svg>
<div class="t" style="left:487px;top:368px;font-size:13px;color:#ccc">shop</div>
<svg class="a" style="left:452px;top:392px" width="6" height="9"><path d="M0.5 0.5 L5 4.5 L0.5 8.5Z" fill="#c8c8c8"/></svg>
<svg class="a" style="left:466px;top:390px" width="16" height="14"><path d="M0.5 1.5 Q0.5 0.5 1.5 0.5 H6 L7.5 2.5 H14 Q15 2.5 15 3.5 V11 Q15 12 14 12 H1.5 Q0.5 12 0.5 11Z" fill="#ffca28"/><rect x="8" y="6" width="7" height="7" rx="1" fill="#fff3c4" opacity=".9"/></svg>
<div class="t" style="left:487px;top:390px;font-size:13px;color:#ccc">static</div>
<svg class="a" style="left:452px;top:414px" width="6" height="9"><path d="M0.5 0.5 L5 4.5 L0.5 8.5Z" fill="#c8c8c8"/></svg>
<svg class="a" style="left:466px;top:412px" width="16" height="14"><path d="M0.5 1.5 Q0.5 0.5 1.5 0.5 H6 L7.5 2.5 H14 Q15 2.5 15 3.5 V11 Q15 12 14 12 H1.5 Q0.5 12 0.5 11Z" fill="#90a4ae"/></svg>
<div class="t" style="left:487px;top:412px;font-size:13px;color:#ccc">tangshi</div>
<div class="a" style="left:431px;top:429px;width:250px;height:22px;background:#3d3d3d"></div>
<svg class="a" style="left:466px;top:434px" width="14" height="14"><rect x="1" y="1" width="12" height="12" fill="#f5c518"/><text x="4.5" y="12" font-size="7" font-family="Liberation Sans" fill="#333">JS</text></svg>
<div class="t" style="left:487px;top:434px;font-size:13px;color:#ccc">app.js</div>
<svg class="a" style="left:464px;top:455px" width="18" height="14"><path d="M5 1.5 Q3 1.5 3 3.5 V5.5 Q3 7 1.5 7 Q3 7 3 8.5 V10.5 Q3 12.5 5 12.5 M13 1.5 Q15 1.5 15 3.5 V5.5 Q15 7 16.5 7 Q15 7 15 8.5 V10.5 Q15 12.5 13 12.5" fill="none" stroke="#f5c518" stroke-width="1.3"/><rect x="6" y="10.5" width="1.2" height="1.2" fill="#f5c518"/><rect x="8.4" y="10.5" width="1.2" height="1.2" fill="#f5c518"/><rect x="10.8" y="10.5" width="1.2" height="1.2" fill="#f5c518"/></svg>
<div class="t" style="left:487px;top:456px;font-size:13px;color:#ccc">app.json</div>
<svg class="a" style="left:466px;top:478px" width="14" height="14"><path d="M2 1 H13 L11.5 12 L6.5 13.5 L1.5 12 L1.8 9.5 H4 L4 10.5 L6.5 11.5 L9.5 10.5 L9.8 8 H3 L3.3 5.5 H10.2 L10.5 3.5 H1.5Z" fill="#42a5f5"/></svg>
<div class="t" style="left:487px;top:478px;font-size:13px;color:#ccc">app.wxss</div>
<svg class="a" style="left:464px;top:500px" width="18" height="12"><ellipse cx="9" cy="6" rx="8.5" ry="5" fill="#3f87d6"/><text x="3.5" y="8" font-size="6.5" font-style="italic" font-family="Liberation Sans" fill="#222">php</text></svg>
<div class="t" style="left:487px;top:500px;font-size:13px;color:#ccc">processor.php</div>
<svg class="a" style="left:464px;top:521px" width="18" height="14"><path d="M5 1.5 Q3 1.5 3 3.5 V5.5 Q3 7 1.5 7 Q3 7 3 8.5 V10.5 Q3 12.5 5 12.5 M13 1.5 Q15 1.5 15 3.5 V5.5 Q15 7 16.5 7 Q15 7 15 8.5 V10.5 Q15 12.5 13 12.5" fill="none" stroke="#f5c518" stroke-width="1.3"/><rect x="6" y="10.5" width="1.2" height="1.2" fill="#f5c518"/><rect x="8.4" y="10.5" width="1.2" height="1.2" fill="#f5c518"/><rect x="10.8" y="10.5" width="1.2" height="1.2" fill="#f5c518"/></svg>
<div class="t" style="left:487px;top:522px;font-size:13px;color:#ccc">project.config.json</div>
<svg class="a" style="left:464px;top:543px" width="18" height="14"><path d="M5 1.5 Q3 1.5 3 3.5 V5.5 Q3 7 1.5 7 Q3 7 3 8.5 V10.5 Q3 12.5 5 12.5 M13 1.5 Q15 1.5 15 3.5 V5.5 Q15 7 16.5 7 Q15 7 15 8.5 V10.5 Q15 12.5 13 12.5" fill="none" stroke="#f5c518" stroke-width="1.3"/><rect x="6" y="10.5" width="1.2" height="1.2" fill="#f5c518"/><rect x="8.4" y="10.5" width="1.2" height="1.2" fill="#f5c518"/><rect x="10.8" y="10.5" width="1.2" height="1.2" fill="#f5c518"/></svg>
<div class="t" style="left:487px;top:544px;font-size:13px;color:#ccc">project.private.config.json</div>
<svg class="a" style="left:464px;top:565px" width="18" height="14"><path d="M5 1.5 Q3 1.5 3 3.5 V5.5 Q3 7 1.5 7 Q3 7 3 8.5 V10.5 Q3 12.5 5 12.5 M13 1.5 Q15 1.5 15 3.5 V5.5 Q15 7 16.5 7 Q15 7 15 8.5 V10.5 Q15 12.5 13 12.5" fill="none" stroke="#f5c518" stroke-width="1.3"/><rect x="6" y="10.5" width="1.2" height="1.2" fill="#f5c518"/><rect x="8.4" y="10.5" width="1.2" height="1.2" fill="#f5c518"/><rect x="10.8" y="10.5" width="1.2" height="1.2" fill="#f5c518"/></svg>
<div class="t" style="left:487px;top:566px;font-size:13px;color:#ccc">sitemap.json</div><!--/EXPCONTENT-->
<!--EDCONTENT--><div class="a" id="code" style="left:0;top:0;width:1429px;height:701px;overflow:hidden;clip-path:inset(130px 0 0 682px)"><div class="a" style="left:751px;top:422px;width:678px;height:19px;background:#3b3b3b"></div>
<div class="a" style="left:750px;top:130px;width:1px;height:462px;background:#474747"></div>
<div class="a" style="left:765px;top:137px;width:1px;height:19px;background:#474747"></div>
<div class="a" style="left:765px;top:194px;width:1px;height:19px;background:#474747"></div>
<div class="a" style="left:765px;top:422px;width:1px;height:152px;background:#555"></div>
<div class="a" style="left:781px;top:441px;width:1px;height:124px;background:#c9a227"></div>
<div class="a" style="left:781px;top:440px;width:96px;height:1px;background:#c9a227"></div>
<div class="t ln" style="top:119px;color:#5f5f5f">3</div>
<div class="t code" style="left:765px;top:119px"><span style="color:#f0a35a">onLaunch</span><span style="color:#d8d8d8">: </span><span style="color:#e9dd7a">function</span><span style="color:#5aa5f0">(){</span></div>
<div class="t ln" style="top:138px;color:#5f5f5f">4</div>
<div class="t code" style="left:765px;top:138px">  <span style="color:#d8d8d8">console.</span><span style="color:#f0a35a">log</span><span style="color:#f3d33f">(</span><span style="color:#7cc4f4">&#x27;</span><span style="color:#f27a64">=================onLaunch==================</span><span style="color:#7cc4f4">&#x27;</span><span style="color:#f3d33f">)</span><span style="color:#d8d8d8">;</span></div>
<div class="t ln" style="top:157px;color:#5f5f5f">5</div>
<div class="t code" style="left:765px;top:157px"><span style="color:#5aa5f0">}</span><span style="color:#d8d8d8">,</span></div>
<div class="t ln" style="top:176px;color:#5f5f5f">6</div>
<svg class="a" style="left:731px;top:179px" width="12" height="8"><path d="M1 1.5 L6 6 L11 1.5" fill="none" stroke="#9a9a9a" stroke-width="1.1"/></svg>
<div class="t code" style="left:765px;top:176px"><span style="color:#f0a35a">onShow</span><span style="color:#d8d8d8">: </span><span style="color:#e9dd7a">function</span><span style="color:#5aa5f0">(){</span></div>
<div class="t ln" style="top:195px;color:#5f5f5f">7</div>
<div class="t code" style="left:765px;top:195px">  <span style="color:#d8d8d8">console.</span><span style="color:#f0a35a">log</span><span style="color:#f3d33f">(</span><span style="color:#7cc4f4">&#x27;</span><span style="color:#f27a64">=================onShow==================</span><span style="color:#7cc4f4">&#x27;</span><span style="color:#f3d33f">)</span><span style="color:#d8d8d8">;</span></div>
<div class="t ln" style="top:214px;color:#5f5f5f">8</div>
<div class="t code" style="left:765px;top:214px"><span style="color:#5aa5f0">}</span><span style="color:#d8d8d8">,</span></div>
<div class="t ln" style="top:233px;color:#5f5f5f">9</div>
<svg class="a" style="left:731px;top:236px" width="12" height="8"><path d="M1 1.5 L6 6 L11 1.5" fill="none" stroke="#9a9a9a" stroke-width="1.1"/></svg>
<div class="t code" style="left:765px;top:233px"><span style="color:#f0a35a">onHide</span><span style="color:#d8d8d8">: </span><span style="color:#e9dd7a">function</span><span style="color:#5aa5f0">(){</span></div>
<div class="t ln" style="top:252px;color:#5f5f5f">10</div>
<div class="t ln" style="top:271px;color:#5f5f5f">11</div>
<div class="t code" style="left:765px;top:271px"><span style="color:#5aa5f0">}</span><span style="color:#d8d8d8">,</span></div>
<div class="t ln" style="top:290px;color:#5f5f5f">12</div>
<div class="t ln" style="top:309px;color:#5f5f5f">13</div>
<div class="t code" style="left:765px;top:309px"><span style="color:#d8d8d8">iwebsocket: </span><span style="color:#f0a35a">require</span><span style="color:#5aa5f0">(</span><span style="color:#7cc4f4">&#x27;</span><span style="color:#f27a64">static/js/utils/websocket.js</span><span style="color:#7cc4f4">&#x27;</span><span style="color:#5aa5f0">)</span><span style="color:#d8d8d8">,</span></div>
<div class="t ln" style="top:328px;color:#5f5f5f">14</div>
<div class="t code" style="left:765px;top:328px"><span style="color:#d8d8d8">util: </span><span style="color:#f0a35a">require</span><span style="color:#5aa5f0">(</span><span style="color:#7cc4f4">&#x27;</span><span style="color:#f27a64">static/js/utils/util.js</span><span style="color:#7cc4f4">&#x27;</span><span style="color:#5aa5f0">)</span><span style="color:#d8d8d8">,</span></div>
<div class="t ln" style="top:347px;color:#5f5f5f">15</div>
<div class="t code" style="left:765px;top:347px"><span style="color:#d8d8d8">Lang: </span><span style="color:#f0a35a">require</span><span style="color:#5aa5f0">(</span><span style="color:#7cc4f4">&#x27;</span><span style="color:#f27a64">static/js/utils/lang.js</span><span style="color:#7cc4f4">&#x27;</span><span style="color:#5aa5f0">)</span><span style="color:#d8d8d8">,</span></div>
<div class="t ln" style="top:366px;color:#5f5f5f">16</div>
<div class="t code" style="left:765px;top:366px"><span style="color:#d8d8d8">WxParse: </span><span style="color:#f0a35a">require</span><span style="color:#5aa5f0">(</span><span style="color:#7cc4f4">&#x27;</span><span style="color:#f27a64">./library/wxParse/wxParse.js</span><span style="color:#7cc4f4">&#x27;</span><span style="color:#5aa5f0">)</span><span style="color:#d8d8d8">,</span></div>
<div class="t ln" style="top:385px;color:#5f5f5f">17</div>
<div class="t ln" style="top:404px;color:#5f5f5f">18</div>
<svg class="a" style="left:731px;top:407px" width="12" height="8"><path d="M1 1.5 L6 6 L11 1.5" fill="none" stroke="#9a9a9a" stroke-width="1.1"/></svg>
<div class="t code" style="left:765px;top:404px"><span style="color:#d8d8d8">ext: </span><span style="color:#5aa5f0">{</span></div>
<div class="t ln" style="top:423px;color:#e6e6e6">19</div>
<svg class="a" style="left:731px;top:426px" width="12" height="8"><path d="M1 1.5 L6 6 L11 1.5" fill="none" stroke="#9a9a9a" stroke-width="1.1"/></svg>
<div class="t code" style="left:765px;top:423px">  <span style="color:#7cc4f4">&quot;</span><span style="color:#f27a64">siteInfo</span><span style="color:#7cc4f4">&quot;</span><span style="color:#d8d8d8">: </span><span style="color:#f3d33f;outline:1px solid #6a6a6a;outline-offset:0">{</span></div>
<div class="t ln" style="top:442px;color:#5f5f5f">20</div>
<div class="t code" style="left:765px;top:442px">    <span style="color:#7cc4f4">&quot;</span><span style="color:#f27a64">uniacid</span><span style="color:#7cc4f4">&quot;</span><span style="color:#d8d8d8">: </span><span style="color:#7cc4f4">&quot;</span><span style="color:#f27a64">1</span><span style="color:#7cc4f4">&quot;</span><span style="color:#d8d8d8">,</span></div>
<div class="t ln" style="top:461px;color:#5f5f5f">21</div>
<div class="t code" style="left:765px;top:461px">    <span style="color:#7cc4f4">&quot;</span><span style="color:#f27a64">siteroot</span><span style="color:#7cc4f4">&quot;</span><span style="color:#d8d8d8">: </span><span style="color:#7cc4f4">&quot;</span><span style="color:#f27a64;text-decoration:underline;text-underline-offset:2px">https://demo15.ynjdzzd008.cn/app/wxapp.php</span><span style="color:#7cc4f4">&quot;</span><span style="color:#d8d8d8">,</span><span style="color:#68b868">//改自己的域名</span></div>
<div class="t ln" style="top:480px;color:#5f5f5f">22</div>
<div class="t code" style="left:765px;top:480px">    <span style="color:#7cc4f4">&quot;</span><span style="color:#f27a64">sitebase</span><span style="color:#7cc4f4">&quot;</span><span style="color:#d8d8d8">: </span><span style="color:#7cc4f4">&quot;</span><span style="color:#f27a64;text-decoration:underline;text-underline-offset:2px">https://demo15.ynjdzzd008.cn/app</span><span style="color:#7cc4f4">&quot;</span><span style="color:#d8d8d8">,</span><span style="color:#68b868">//改自己的域名</span></div>
<div class="t ln" style="top:499px;color:#5f5f5f">23</div>
<div class="t code" style="left:765px;top:499px">    <span style="color:#7cc4f4">&quot;</span><span style="color:#f27a64">module</span><span style="color:#7cc4f4">&quot;</span><span style="color:#d8d8d8">: </span><span style="color:#7cc4f4">&quot;</span><span style="color:#f27a64">we7_wmall</span><span style="color:#7cc4f4">&quot;</span><span style="color:#d8d8d8">,</span></div>
<div class="t ln" style="top:518px;color:#5f5f5f">24</div>
<div class="t code" style="left:765px;top:518px">    <span style="color:#7cc4f4">&quot;</span><span style="color:#f27a64">lang</span><span style="color:#7cc4f4">&quot;</span><span style="color:#d8d8d8">: </span><span style="color:#7cc4f4">&quot;</span><span style="color:#f27a64">europe</span><span style="color:#7cc4f4">&quot;</span><span style="color:#d8d8d8">,</span></div>
<div class="t ln" style="top:537px;color:#5f5f5f">25</div>
<div class="t code" style="left:765px;top:537px">    <span style="color:#7cc4f4">&quot;</span><span style="color:#f27a64">version</span><span style="color:#7cc4f4">&quot;</span><span style="color:#d8d8d8">: </span><span style="color:#7cc4f4">&quot;</span><span style="color:#f27a64">50.90.5</span><span style="color:#7cc4f4">&quot;</span></div>
<div class="t ln" style="top:556px;color:#5f5f5f">26</div>
<div class="t code" style="left:765px;top:556px">  <span style="color:#f3d33f;outline:1px solid #6a6a6a">}</span></div>
<div class="t ln" style="top:575px;color:#5f5f5f">27</div>
<div class="t code" style="left:765px;top:575px"><span style="color:#5aa5f0">}</span></div>
<div class="t ln" style="top:594px;color:#5f5f5f">28</div>
<div class="t code" style="left:749px;top:594px"><span style="color:#d66fd6">}</span><span style="color:#f3d33f">)</span><span style="color:#d8d8d8">;</span></div>
<div class="t ln" style="top:613px;color:#5f5f5f">29</div>
<div class="t" style="left:749px;top:613px;font-size:16.7px;color:#68b868">// 大鹏源码网 wobbt.com</div></div><svg class="a" style="left:693px;top:86px" width="14" height="14"><rect x="1" y="1" width="12" height="12" fill="#f5c518"/><text x="4.5" y="12" font-size="7" font-family="Liberation Sans" fill="#333">JS</text></svg>
<div class="t" style="left:713px;top:86px;font-size:13px;color:#fff">app.js</div>
<svg class="a" style="left:778px;top:86px" width="13" height="13"><path d="M2 2 L11 11 M11 2 L2 11" stroke="#eee" stroke-width="1.5"/></svg>
<svg class="a" style="left:688px;top:112px" width="17" height="14"><path d="M5 2.5H16M5 5.5H16M5 8.5H16M5 11.5H16" stroke="#aaa" stroke-width="1"/><path d="M1 2.5H3M1 5.5H3M1 8.5H3M1 11.5H3" stroke="#aaa" stroke-width="1"/></svg>
<svg class="a" style="left:720px;top:111px" width="14" height="16"><path d="M2.5 1.5H11.5V14.5L7 10L2.5 14.5Z" fill="none" stroke="#9a9a9a" stroke-width="1.2"/></svg>
<svg class="a" style="left:749px;top:112px" width="16" height="14"><path d="M15 7H2M7 2L2 7L7 12" fill="none" stroke="#9a9a9a" stroke-width="1.2"/></svg>
<svg class="a" style="left:777px;top:112px" width="16" height="14"><path d="M1 7H14M9 2L14 7L9 12" fill="none" stroke="#5e5e5e" stroke-width="1.2"/></svg>
<svg class="a" style="left:809px;top:112px" width="14" height="14"><rect x="1" y="1" width="12" height="12" fill="#f5c518"/><text x="4.5" y="12" font-size="7" font-family="Liberation Sans" fill="#333">JS</text></svg>
<div class="t" style="left:830px;top:113px;font-size:13px;color:#bbb">app.js</div>
<svg class="a" style="left:868px;top:113px" width="8" height="12"><path d="M1.5 1.5L6 6L1.5 10.5" fill="none" stroke="#aaa" stroke-width="1.1"/></svg>
<svg class="a" style="left:879px;top:111px" width="17" height="16"><path d="M2 14.5 L9 7.5 M8 8 Q6.5 3 11 2 L12.5 2 L10.5 4.5 L12 6 L14.5 4 Q15 8 9.5 9" fill="none" stroke="#aaa" stroke-width="1.2"/></svg>
<div class="t" style="left:901px;top:113px;font-size:13px;color:#bbb">ext</div>
<svg class="a" style="left:924px;top:113px" width="8" height="12"><path d="M1.5 1.5L6 6L1.5 10.5" fill="none" stroke="#aaa" stroke-width="1.1"/></svg>
<svg class="a" style="left:934px;top:111px" width="17" height="16"><path d="M2 14.5 L9 7.5 M8 8 Q6.5 3 11 2 L12.5 2 L10.5 4.5 L12 6 L14.5 4 Q15 8 9.5 9" fill="none" stroke="#aaa" stroke-width="1.2"/></svg>
<div class="t" style="left:957px;top:113px;font-size:13px;color:#bbb">"siteInfo"</div>
<!--/EDCONTENT-->
<!--DBGCONTENT--><div class="t" style="left:702px;top:711px;font-size:11px;color:#e6e6e6">调试器</div>
<div class="a" style="left:702px;top:729px;width:33px;height:2px;background:#ddd"></div>
<div class="a" style="left:743px;top:707px;width:45px;height:19px;border-radius:10px;background:#484848"></div>
<div class="t" style="left:748px;top:711px;font-size:11px;color:#eee;letter-spacing:-0.3px">15, 101</div>
<div class="t" style="left:807px;top:711px;font-size:11px;color:#9a9a9a">问题</div>
<div class="t" style="left:849px;top:711px;font-size:11px;color:#9a9a9a">输出</div>
<div class="t" style="left:891px;top:711px;font-size:11px;color:#9a9a9a">终端</div>
<div class="t" style="left:933px;top:711px;font-size:11px;color:#9a9a9a">代码质量</div>
<svg class="a" style="left:690px;top:737px" width="17" height="16"><path d="M6 13.5H1.5V1.5H13.5V6" fill="none" stroke="#9a9a9a" stroke-width="1.1"/><path d="M7 7L15 10L11.5 11L14.5 14.5L13.5 15.5L10.5 12L9.5 15Z" fill="#9a9a9a"/></svg>
<div class="a" style="left:716px;top:737px;width:1px;height:15px;background:#444"></div>
<div class="a" style="left:777px;top:732px;width:66px;height:25px;background:#000"></div>
<div class="t" style="left:734px;top:739px;font-size:12px;color:#e0e0e0">Wxml</div>
<div class="t" style="left:789px;top:739px;font-size:12px;color:#e0e0e0">Console</div>
<div class="t" style="left:854px;top:739px;font-size:12px;color:#e0e0e0">Sources</div>
<div class="t" style="left:919px;top:739px;font-size:12px;color:#e0e0e0">Network</div>
<div class="t" style="left:988px;top:739px;font-size:12px;color:#e0e0e0">Performance</div>
<div class="t" style="left:1080px;top:739px;font-size:12px;color:#e0e0e0">Memory</div>
<div class="t" style="left:1147px;top:739px;font-size:12px;color:#e0e0e0">AppData</div>
<div class="t" style="left:1217px;top:739px;font-size:12px;color:#e0e0e0">Storage</div>
<div class="t" style="left:1283px;top:739px;font-size:12px;color:#e0e0e0">Security</div>
<div class="t" style="left:1357px;top:739px;font-size:12px;color:#e0e0e0">Sensor</div>
<div class="t" style="left:1416px;top:739px;font-size:12px;color:#e0e0e0">Mock</div>
<svg class="a" style="left:689px;top:763px" width="17" height="16"><rect x="1.5" y="1.5" width="14" height="13" fill="none" stroke="#9a9a9a" stroke-width="1.1"/><path d="M5.5 1.5V14.5" stroke="#9a9a9a" stroke-width="1.1"/><path d="M8 4.5L13 8L8 11.5Z" fill="#9a9a9a"/></svg>
<svg class="a" style="left:719px;top:764px" width="15" height="15"><circle cx="7.5" cy="7.5" r="5.8" fill="none" stroke="#9a9a9a" stroke-width="1.6"/><path d="M3.5 3.5L11.5 11.5" stroke="#9a9a9a" stroke-width="1.6"/></svg>
<div class="a" style="left:745px;top:763px;width:1px;height:16px;background:#444"></div>
<div class="t" style="left:754px;top:766px;font-size:12px;color:#e6e6e6">appservice (#15)</div>
<svg class="a" style="left:874px;top:767px" width="9" height="8"><path d="M0.5 0.5H8.5L4.5 7.5Z" fill="#9a9a9a"/></svg>
<div class="a" style="left:892px;top:763px;width:1px;height:16px;background:#444"></div>
<svg class="a" style="left:901px;top:764px" width="18" height="14"><path d="M1 7Q9 -1 17 7Q9 15 1 7Z" fill="#9a9a9a"/><circle cx="9" cy="7" r="3.2" fill="#292a2d"/><circle cx="9" cy="7" r="1.8" fill="#9a9a9a"/></svg>
<div class="a" style="left:928px;top:763px;width:1px;height:16px;background:#444"></div>
<div class="a" style="left:935px;top:761px;width:251px;height:22px;background:#202124;border:1px solid #4a4a4a"></div>
<div class="t" style="left:940px;top:767px;font-size:12px;color:#e6e6e6">Filter</div>
<div class="t" style="left:1193px;top:766px;font-size:12px;color:#e6e6e6">Default levels</div>
<svg class="a" style="left:1269px;top:767px" width="8" height="8"><path d="M0.5 0.5H7.5L4 6.5Z" fill="#9a9a9a"/></svg>
<div class="a" style="left:682px;top:785px;width:747px;height:101px;background:#242424"></div>
<div class="a" style="left:682px;top:785px;width:747px;height:5px;overflow:hidden"><div class="t mono" style="left:34px;top:-9px;color:#ccc;font-style:italic">{data: {…}, header: {…}, statusCode: 200, cookies: Array(1), errMsg: "request:ok"}</div></div>
<div class="a" style="left:682px;top:790px;width:747px;height:21px;background:#312900;border-top:1px solid #6b5500;border-bottom:1px solid #6b5500"></div>
<svg class="a" style="left:688px;top:794px" width="13" height="12"><path d="M6.5 0.5L12.5 11.5H0.5Z" fill="#f5c400"/><rect x="5.8" y="3.8" width="1.5" height="4.5" fill="#312900"/><rect x="5.8" y="9.2" width="1.5" height="1.5" fill="#312900"/></svg>
<svg class="a" style="left:708px;top:797px" width="6" height="8"><path d="M0.5 0.5L5 4L0.5 7.5Z" fill="#9a9a9a"/></svg>
<div class="t mono" style="left:716px;top:797px;color:#f0e6c8">Setting data field "recommend_stores" to undefined is invalid.</div>
<div class="t mono" style="left:706px;top:817px;color:#dedede;text-decoration:underline">https://demo15.ynjdzzd008.cn/app/wxapp.php?i=1&amp;v=50.90.5&amp;m=we7_wmall&amp;c=entr…oods&amp;ta=activity&amp;&amp;from=wxapp&amp;state=</div>
<div class="a" style="left:682px;top:830px;width:747px;height:1px;background:#3a3a3a"></div>
<svg class="a" style="left:708px;top:839px" width="6" height="8"><path d="M0.5 0.5L5 4L0.5 7.5Z" fill="#9a9a9a"/></svg>
<div class="t mono" style="left:716px;top:838px;font-style:italic"><span style="color:#d0d0d0">{sid: </span><span style="color:#f28b54">"642"</span><span style="color:#d0d0d0">, scene: </span><span style="color:#9980ff">1001</span><span style="color:#d0d0d0">, lat: </span><span style="color:#f28b54">"25.101107"</span><span style="color:#d0d0d0">, lng: </span><span style="color:#f28b54">"102.93211"</span><span style="color:#d0d0d0">, __lat: </span><span style="color:#f28b54">"25.101107"</span><span style="color:#d0d0d0">, …}</span></div>
<svg class="a" style="left:708px;top:860px" width="6" height="8"><path d="M0.5 0.5L5 4L0.5 7.5Z" fill="#9a9a9a"/></svg>
<div class="t mono" style="left:716px;top:859px;font-style:italic"><span style="color:#d0d0d0">{data: {…}, header: {…}, statusCode: </span><span style="color:#9980ff">200</span><span style="color:#d0d0d0">, cookies: Array(1), errMsg: </span><span style="color:#f28b54">"request:ok"</span><span style="color:#d0d0d0">}</span></div>
<svg class="a" style="left:708px;top:882px" width="6" height="8"><path d="M0.5 0.5L5 4L0.5 7.5Z" fill="#9a9a9a"/></svg>
<div class="t mono" style="left:716px;top:881px;font-style:italic"><span style="color:#d0d0d0">{data: {…}, header: {…}, statusCode: </span><span style="color:#9980ff">200</span><span style="color:#d0d0d0">, cookies: Array(1), errMsg: </span><span style="color:#f28b54">"request:ok"</span><span style="color:#d0d0d0">}</span></div>
<div class="a" style="left:682px;top:852px;width:747px;height:1px;background:#3a3a3a"></div>
<div class="a" style="left:682px;top:874px;width:747px;height:1px;background:#3a3a3a"></div><!--/DBGCONTENT-->
</body></html>
